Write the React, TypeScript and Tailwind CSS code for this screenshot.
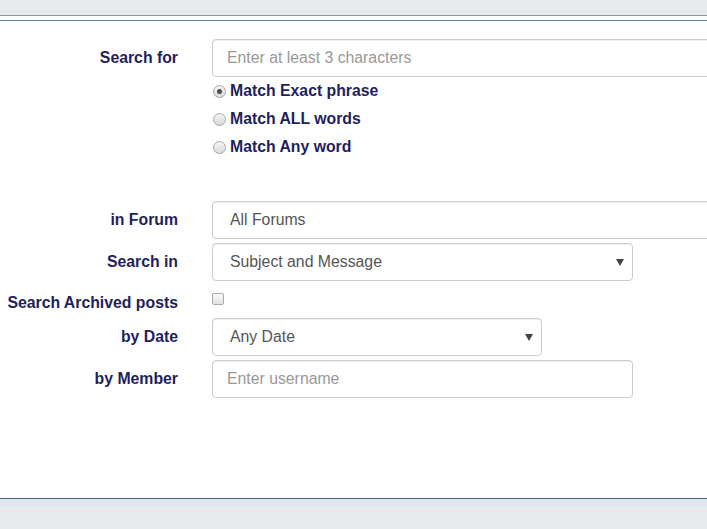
import React from "react";

const labelCls =
  "w-[178px] shrink-0 text-right font-bold text-[15.8px] text-[#1f1f5e] leading-[18px]";
const boxCls =
  "h-[38px] shrink-0 rounded-[4px] border border-[#cccccc] bg-white shadow-[inset_0_1px_1px_rgba(0,0,0,0.075)] flex items-center text-[15.8px] text-[#555555]";

const Radio = ({ checked, label }: { checked?: boolean; label: string }) => (
  <div className="h-[28px] flex items-center">
    <span className="w-[13px] h-[13px] ml-[1px] rounded-full border border-[#a9a9a9] bg-gradient-to-b from-[#f4f4f4] to-[#d9d9d9] flex items-center justify-center">
      {checked && <span className="w-[5px] h-[5px] rounded-full bg-[#4d4d4d]" />}
    </span>
    <span className="ml-[4px] font-bold text-[15.8px] text-[#1f1f5e]">{label}</span>
  </div>
);

const Arrow = () => (
  <svg width="8" height="7" viewBox="0 0 8 7" className="shrink-0">
    <path d="M0 0 L8 0 L4 7 Z" fill="#444" />
  </svg>
);

const Row = ({ label, children, className = "" }: { label: string; children: React.ReactNode; className?: string }) => (
  <div className={`flex items-center ${className}`}>
    <div className={labelCls}>{label}</div>
    <div className="ml-[34px] flex">{children}</div>
  </div>
);

export default function App() {
  return (
    <div className="h-screen flex flex-col bg-[#e8e9ec] overflow-hidden font-['Liberation_Sans',Arial,sans-serif]">
      <div className="h-[16px] shrink-0 border-b border-[#909396]" />
      <div className="h-[4px] shrink-0 bg-white" />
      <div className="h-[479px] shrink-0 bg-white border-t border-b border-t-[#5a80b0] border-b-[#3f6c78] pt-[18px]">
        <Row label="Search for">
          <div className={`${boxCls} w-[540px] pl-[14px] text-[#999999]`}>Enter at least 3 characters</div>
        </Row>
        <div className="ml-[212px]">
          <Radio checked label="Match Exact phrase" />
          <Radio label="Match ALL words" />
          <Radio label="Match Any word" />
        </div>
        <Row label="in Forum" className="mt-[40px]">
          <div className={`${boxCls} w-[540px] pl-[17px]`}>All Forums</div>
        </Row>
        <Row label="Search in" className="mt-[4px]">
          <div className={`${boxCls} w-[421px] pl-[17px] pr-[8px] justify-between`}>
            <span>Subject and Message</span>
            <Arrow />
          </div>
        </Row>
        <div className="flex h-[37px]">
          <div className={`${labelCls} pt-[13px]`}>Search Archived posts</div>
          <div className="ml-[34px] pt-[12px]">
            <span className="block w-[12px] h-[12px] rounded-[2px] border border-[#a9a9a9] bg-gradient-to-b from-[#fafafa] to-[#e2e2e2]" />
          </div>
        </div>
        <Row label="by Date">
          <div className={`${boxCls} w-[330px] pl-[17px] pr-[8px] justify-between`}>
            <span>Any Date</span>
            <Arrow />
          </div>
        </Row>
        <Row label="by Member" className="mt-[4px]">
          <div className={`${boxCls} w-[421px] pl-[14px] text-[#999999]`}>Enter username</div>
        </Row>
      </div>
      <div className="h-[7px] shrink-0 bg-[#dfe6ee]" />
    </div>
  );
}
